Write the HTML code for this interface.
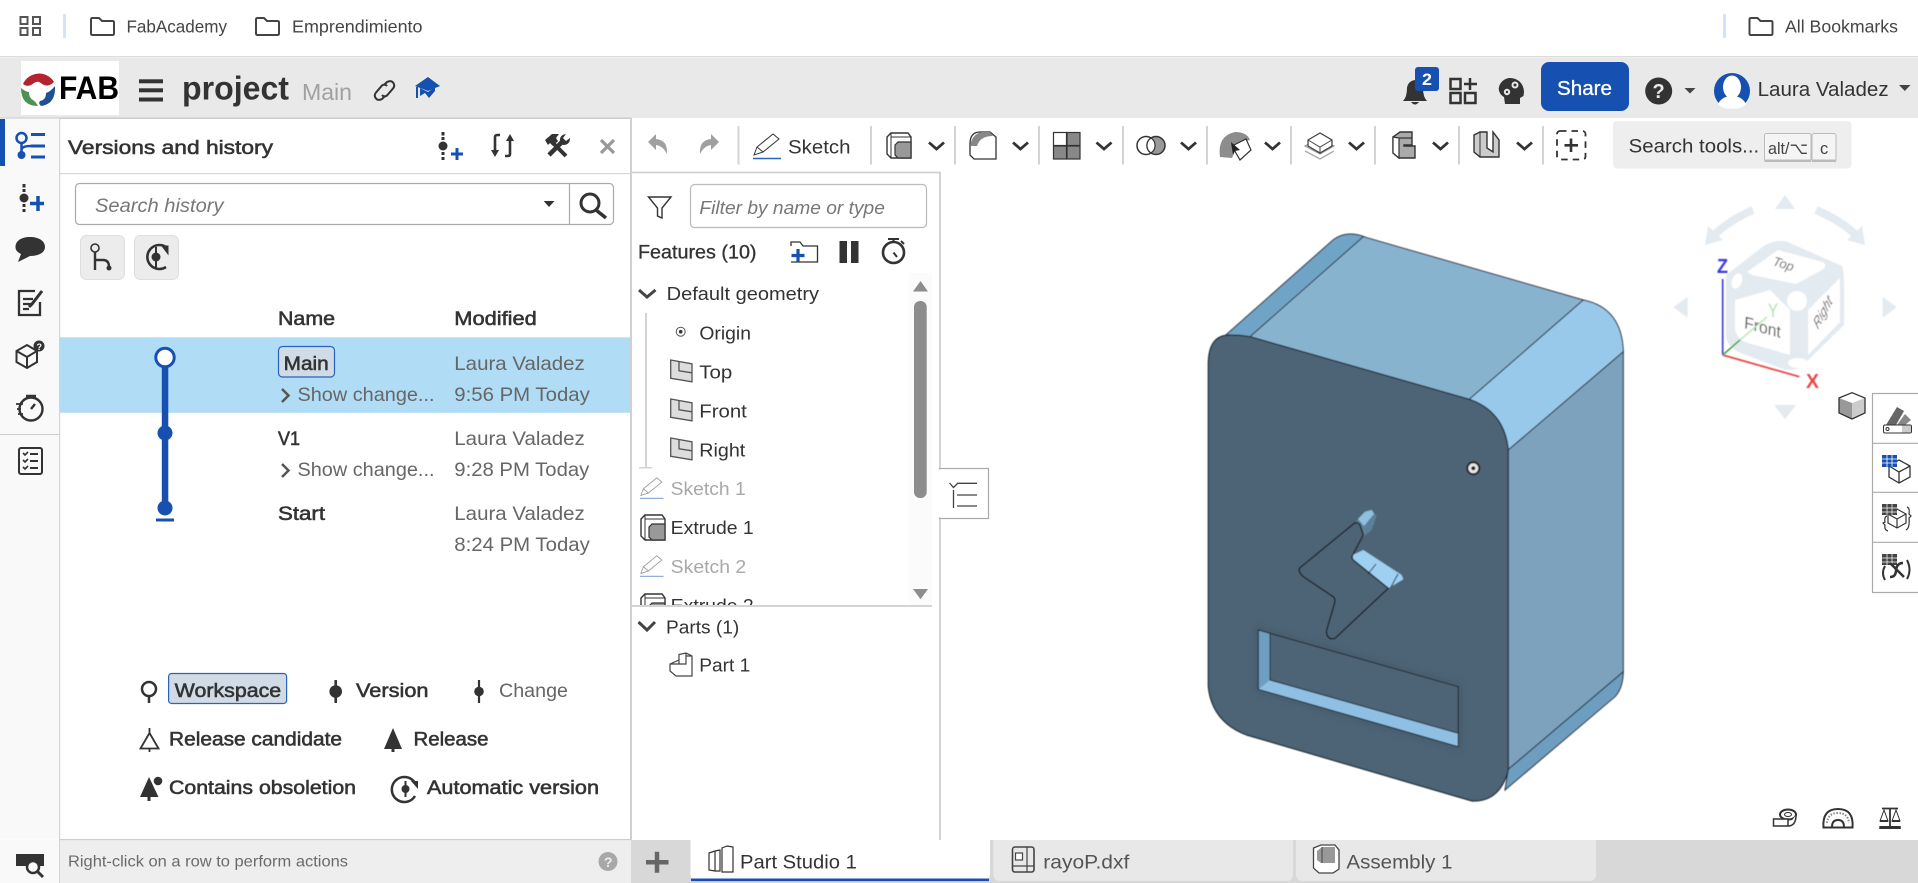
<!DOCTYPE html>
<html><head><meta charset="utf-8"><title>project</title>
<style>
html,body{margin:0;padding:0;background:#fff;width:1918px;height:883px;overflow:hidden}
svg{display:block}
text{font-family:"Liberation Sans",sans-serif;font-size:19px;fill:#333}
.bb{font-weight:bold}
.b{stroke:#333;stroke-width:.55px}
.g{fill:#666}
.l{fill:#a8a8a8}
.m{stroke:#333;stroke-width:.3px}
.i{font-style:italic;fill:#777}
</style></head><body>
<svg width="1918" height="883" viewBox="0 0 1918 883" xmlns="http://www.w3.org/2000/svg">
<defs>
<path id="ch" d="M0 0l7.5 6.5L15 0" fill="none" stroke="#333" stroke-width="2.8"/>
<g id="fold"><path d="M1 16.500V2.500Q1 1 2.500 1H9l3 3h10.500Q24 4 24 5.500v11Q24 18 22.500 18H2.500Q1 18 1 16.500Z" fill="none" stroke="#444" stroke-width="2"/></g>
<g id="plane"><path d="M.7.7L22 4.500V22.500L.7 19Z" fill="#ddd" stroke="#555" stroke-width="1.300"/><path d="M9 2.500V11.500L22 13.500" fill="none" stroke="#555" stroke-width="1.300"/></g>
<g id="pen"><path d="M1 22L4 14L20 1L26 6L10 19Z M4 14L10 19" fill="#fff" stroke="#333" stroke-width="1"/><path d="M0 25.500H28" stroke="#2a62c0" stroke-width="1.500"/></g>
<g id="ext"><path d="M1 5L5 1H22L25 5V26H5L1 22Z" fill="#fff" stroke="#333" stroke-width="1.400"/><path d="M5 1V26M5 5H25" fill="none" stroke="#333" stroke-width="1"/><path d="M9 13L12 10H25V26H12L9 23Z" fill="#999" stroke="#333" stroke-width="1.200"/></g>
<filter id="bl"><feGaussianBlur stdDeviation=".45"/></filter>
<filter id="bl2"><feGaussianBlur stdDeviation=".6"/></filter>
<filter id="bl3"><feGaussianBlur stdDeviation="3"/></filter>
</defs>

<!-- bookmarks -->
<rect width="1918" height="57" fill="#fff"/>
<g fill="none" stroke="#555" stroke-width="2"><rect x="20.500" y="17" width="7" height="7"/><rect x="33" y="17" width="7" height="7"/><rect x="20.500" y="28" width="7" height="7"/><rect x="33" y="28" width="7" height="7"/></g>
<rect x="63" y="14" width="3" height="24" fill="#d3e3fd"/>
<use href="#fold" x="90" y="17"/>
<text x="126.500" y="32.500" style="font-size:17.500px;fill:#444" textLength="100.500" lengthAdjust="spacingAndGlyphs">FabAcademy</text>
<use href="#fold" x="255" y="17"/>
<text x="292" y="32.500" style="font-size:17.500px;fill:#444" textLength="130.500" lengthAdjust="spacingAndGlyphs">Emprendimiento</text>
<rect x="1723" y="14" width="3" height="24" fill="#d3e3fd"/>
<use href="#fold" x="1748.500" y="17"/>
<text x="1785" y="32.500" style="font-size:17.500px;fill:#444" textLength="113" lengthAdjust="spacingAndGlyphs">All Bookmarks</text>
<rect y="56" width="1918" height="1.500" fill="#dcdcdc"/>

<!-- header -->
<rect y="58" width="1918" height="60" fill="#e9e9e9"/>
<rect x="21" y="61" width="98" height="54" fill="#fff"/>
<path d="M23 84A17.500 17.500 0 0 1 54 82Q48 88 42 84Q38 80 34 83Q28 88 23 84Z" fill="#b4232e"/>
<path d="M21 88Q26 92 29 92Q29 98 33 100Q36 102 38 106Q21 106 21 88Z" fill="#4f9152"/>
<path d="M55 86Q56 104 41 106Q38 103 40 101Q46 100 46 93Q50 92 55 86Z" fill="#1f4f96"/>
<text x="59" y="99" class="bb" style="font-size:32px;fill:#000" textLength="60" lengthAdjust="spacingAndGlyphs">FAB</text>
<g fill="#333"><rect x="139" y="79.300" width="24" height="4"/><rect x="139" y="88.300" width="24" height="4"/><rect x="139" y="97.500" width="24" height="4"/></g>
<text x="182" y="99.300" class="bb" style="font-size:33px" textLength="107" lengthAdjust="spacingAndGlyphs">project</text>
<text x="302" y="100" style="font-size:23px;fill:#a0a0a0" textLength="50" lengthAdjust="spacingAndGlyphs">Main</text>
<g fill="none" stroke="#333" stroke-width="2"><path d="M384 85l3-3q4-2 6 .5 2.500 3 0 6l-6 7q-3 2-5-.5"/><path d="M385 96l-3 3q-4 2-6-.5-2.500-3 0-6l6-7q3-2 5 .5"/></g>
<path d="M415 86L428 77L440 86L428 91Z" fill="#1650b0"/>
<path d="M420 90V96L425 93L429 98L435 91V87L428 92L420 88Z" fill="#1650b0"/>
<rect x="416" y="87" width="2" height="11" fill="#1650b0"/>
<path d="M1403 101Q1407 97 1407 88Q1408 81 1415 80Q1422 81 1423 88Q1423 97 1427 101ZM1411 102Q1415 107 1419 102Z" fill="#333"/>
<rect x="1415" y="67" width="24" height="24" rx="3" fill="#1650b0"/>
<text x="1422" y="85" class="bb" style="font-size:17px;fill:#fff" textLength="10" lengthAdjust="spacingAndGlyphs">2</text>
<g fill="none" stroke="#333" stroke-width="2.500"><rect x="1450.500" y="79" width="10" height="10"/><rect x="1450.500" y="93" width="10" height="10"/><rect x="1465" y="93" width="10.500" height="10"/><path d="M1470 78V90M1464 84H1477"/></g>
<path d="M1510 78C1519 78 1524 85 1524 92L1523.500 96L1520 98V104H1505L1504 97C1500 95 1498 90 1499 87C1500 82 1505 78 1510 78Z" fill="#333"/>
<g fill="none" stroke="#e9e9e9" stroke-width="2"><circle cx="1515" cy="85" r="2.500"/><circle cx="1507" cy="92" r="2.200"/></g>
<rect x="1541" y="62" width="88" height="49" rx="8" fill="#1650b0"/>
<text x="1557" y="95" style="font-size:20px;fill:#fff;stroke:#fff;stroke-width:.3px" textLength="55" lengthAdjust="spacingAndGlyphs">Share</text>
<circle cx="1658.700" cy="91" r="13.500" fill="#333"/>
<text x="1652.500" y="98" class="bb" style="font-size:20px;fill:#e9e9e9">?</text>
<path d="M1684.500 88h11l-5.500 5.500z" fill="#444"/>
<ellipse cx="1732" cy="91" rx="18" ry="18" fill="#1650b0"/>
<ellipse cx="1732" cy="87" rx="9" ry="11.500" fill="#fff"/>
<path d="M1718 104Q1722 96 1732 96Q1742 96 1746 104Q1742 109 1732 109Q1722 109 1718 104Z" fill="#fff"/>
<text x="1757.600" y="96" style="font-size:20.500px" textLength="131" lengthAdjust="spacingAndGlyphs">Laura Valadez</text>
<path d="M1899 85h11.500l-5.700 6z" fill="#444"/>
<rect y="117.500" width="632" height="1.500" fill="#ccc"/>

<!-- left sidebar -->
<rect y="118.500" width="60" height="721" fill="#f9f9f9"/>
<rect y="840" width="60" height="43" fill="#f9f9f9"/>
<rect x="59" y="118" width="1.200" height="765" fill="#d4d4d4"/>
<rect y="119" width="5" height="47" fill="#1650b0"/>
<g fill="none" stroke="#1650b0" stroke-width="2.500"><circle cx="21.500" cy="138" r="5"/><path d="M21.500 143V156M21.500 150Q21.500 146 31 146"/></g>
<g fill="#1650b0"><circle cx="21.500" cy="155" r="4"/><rect x="31" y="133" width="14" height="3"/><rect x="31" y="144.500" width="14" height="3"/><rect x="31" y="155.500" width="14" height="3"/></g>
<g fill="#333"><circle cx="24" cy="198" r="4.500"/><rect x="22.500" y="184" width="3" height="3.500"/><rect x="22.500" y="189" width="3" height="3"/><rect x="22.500" y="204" width="3" height="3"/><rect x="22.500" y="209" width="3" height="3"/></g>
<path d="M38 196V211M30 203.500H44" stroke="#1650b0" stroke-width="3.500"/>
<path d="M30 237C39 237 45 241 45 247C45 253 38 256 30 256L18 262L21 254C17 252 15.500 250 15.500 247C15.500 241 21 237 30 237Z" fill="#333"/>
<g fill="none" stroke="#333" stroke-width="2.300"><path d="M40 302V315H19V291H35"/><path d="M23 299H33M23 304H33M23 309H29"/></g>
<path d="M42 291L32 304L29 307" stroke="#333" stroke-width="3" fill="none"/>
<g fill="none" stroke="#333" stroke-width="2"><path d="M16.500 351L27 345L37 351V362L27 368L16.500 362ZM16.500 351L27 357L37 351M27 357V368"/></g>
<circle cx="39" cy="346" r="5.500" fill="#333"/><text x="36.500" y="350" class="bb" style="font-size:9px;fill:#fff">?</text>
<g fill="none" stroke="#333" stroke-width="2.400"><circle cx="31" cy="409" r="11.500"/><path d="M26 396H36M31 396V398M31 409L35 404"/><path d="M16 404H23M17 409H21M18 414H23" stroke-width="1.800"/></g>
<rect y="434" width="59" height="1" fill="#ccc"/>
<rect x="19" y="448" width="23" height="26" rx="2" fill="none" stroke="#333" stroke-width="2"/>
<g fill="none" stroke="#333" stroke-width="1.600"><path d="M23 453l2 2 3-3M23 460l2 2 3-3M23 467l2 2 3-3"/><path d="M30 454H38M30 461H38M30 468H38" stroke-width="2"/></g>
<path d="M16 854H44V866H39A10 10 0 0 0 27 866H16Z" fill="#333"/>
<circle cx="33" cy="867" r="6" fill="#fff" stroke="#333" stroke-width="2.500"/><path d="M37 871L43 877" stroke="#333" stroke-width="3"/>

<!-- versions panel -->
<rect x="60" y="840" width="571" height="43" fill="#eee"/>
<rect x="60" y="839" width="571" height="1.200" fill="#ccc"/>
<text x="68" y="866.500" style="font-size:16px;fill:#6b6b6b" textLength="280" lengthAdjust="spacingAndGlyphs">Right-click on a row to perform actions</text>
<circle cx="608" cy="861.500" r="9.500" fill="#a8a8a8"/><text x="604" y="867" class="bb" style="font-size:14px;fill:#eee">?</text>
<text x="68" y="154" class="b" style="font-size:19.500px" textLength="205" lengthAdjust="spacingAndGlyphs">Versions and history</text>
<g fill="#333"><circle cx="443" cy="146" r="4.500"/><rect x="441.500" y="132" width="3" height="3.500"/><rect x="441.500" y="137" width="3" height="3"/><rect x="441.500" y="152" width="3" height="3"/><rect x="441.500" y="157" width="3" height="3"/></g>
<path d="M457 148V160M451 154H463" stroke="#1650b0" stroke-width="3"/>
<g fill="none" stroke="#333" stroke-width="2.600"><path d="M495 151V137Q495 135 497.500 135H500"/><path d="M510 140V154Q510 156 507.500 156H505"/></g>
<g fill="#333"><path d="M491 150H499L495 157Z"/><path d="M506 141H514L510 134Z"/></g>
<path d="M549 155L564 140" stroke="#333" stroke-width="4.500"/>
<path d="M566 156L551 141" stroke="#333" stroke-width="4"/>
<path d="M545 140L552 134H559L556 138L558 141L553 146L550 143L548 145Z" fill="#333"/>
<path d="M560 142Q559 135 566 134L563 138L566 141L570 138Q570 145 563 145Z" fill="#333"/>
<path d="M601 140L614 153M614 140L601 153" stroke="#999" stroke-width="3.200"/>
<rect x="60" y="173" width="570" height="1.200" fill="#d8d8d8"/>
<rect x="75.500" y="183.500" width="538" height="41" rx="4" fill="#fff" stroke="#aaa" stroke-width="1.200"/>
<path d="M569.500 184V224" stroke="#aaa" stroke-width="1.200"/>
<text x="95" y="212" class="i" style="font-size:19.500px" textLength="128.500" lengthAdjust="spacingAndGlyphs">Search history</text>
<path d="M543.700 201H554.500L549 207Z" fill="#333"/>
<circle cx="590" cy="203" r="9" fill="none" stroke="#333" stroke-width="3"/><path d="M596 210L606 218" stroke="#333" stroke-width="3.500"/>
<rect x="80.500" y="235.500" width="44" height="44" rx="6" fill="#ececec" stroke="#ddd"/>
<rect x="134.500" y="235.500" width="44" height="44" rx="6" fill="#ececec" stroke="#ddd"/>
<circle cx="95" cy="248" r="4" fill="none" stroke="#333" stroke-width="1.600"/>
<path d="M95 252V270M95 260H103Q109 260 109 267" fill="none" stroke="#333" stroke-width="2.400"/><circle cx="109" cy="268" r="2.500" fill="#333"/>
<path d="M166 247A12 12 0 1 0 166 267" fill="none" stroke="#333" stroke-width="2.600"/><path d="M162 246H168V254Z" fill="#333" stroke="#333"/>
<path d="M156 247V268" stroke="#333" stroke-width="2"/><circle cx="156" cy="257" r="4.500" fill="#333"/>

<text x="278" y="325" class="b" style="font-size:19px" textLength="57" lengthAdjust="spacingAndGlyphs">Name</text>
<text x="454.300" y="325" class="b" style="font-size:19px" textLength="82.500" lengthAdjust="spacingAndGlyphs">Modified</text>
<rect x="60" y="337.300" width="570" height="75.500" fill="#b0dcf6"/>
<rect x="161.800" y="360" width="6.500" height="153" fill="#1650b0"/>
<circle cx="165" cy="357.500" r="9.200" fill="#fff" stroke="#1650b0" stroke-width="3"/>
<circle cx="165" cy="433" r="7.500" fill="#1650b0"/><circle cx="165" cy="508" r="7.500" fill="#1650b0"/>
<rect x="156" y="518.500" width="18" height="3" fill="#1650b0"/>
<rect x="278.500" y="346.500" width="56" height="30.500" rx="4" fill="#d0dbe6" stroke="#2a62c0" stroke-width="1.200"/>
<text x="283.700" y="370" class="b" style="font-size:19px" textLength="45" lengthAdjust="spacingAndGlyphs">Main</text>
<text x="454.300" y="370" class="g" style="font-size:19.500px" textLength="130.500" lengthAdjust="spacingAndGlyphs">Laura Valadez</text>
<path d="M282 389L288.500 395.500L282 402" fill="none" stroke="#555" stroke-width="2.500"/>
<text x="297.500" y="401" class="g" style="font-size:19.500px" textLength="137" lengthAdjust="spacingAndGlyphs">Show change...</text>
<text x="454.300" y="401" class="g" style="font-size:19.500px" textLength="135.500" lengthAdjust="spacingAndGlyphs">9:56 PM Today</text>
<text x="278" y="445" class="b" style="font-size:19px" textLength="22" lengthAdjust="spacingAndGlyphs">V1</text>
<text x="454.300" y="445" class="g" style="font-size:19.500px" textLength="130.500" lengthAdjust="spacingAndGlyphs">Laura Valadez</text>
<path d="M282 464L288.500 470.500L282 477" fill="none" stroke="#555" stroke-width="2.500"/>
<text x="297.500" y="476" class="g" style="font-size:19.500px" textLength="137" lengthAdjust="spacingAndGlyphs">Show change...</text>
<text x="454.300" y="476" class="g" style="font-size:19.500px" textLength="135" lengthAdjust="spacingAndGlyphs">9:28 PM Today</text>
<text x="278" y="520" class="b" style="font-size:19px" textLength="47" lengthAdjust="spacingAndGlyphs">Start</text>
<text x="454.300" y="520" class="g" style="font-size:19.500px" textLength="130.500" lengthAdjust="spacingAndGlyphs">Laura Valadez</text>
<text x="454.300" y="551" class="g" style="font-size:19.500px" textLength="135.500" lengthAdjust="spacingAndGlyphs">8:24 PM Today</text>

<!-- legend -->
<circle cx="149" cy="689" r="7" fill="none" stroke="#333" stroke-width="2.500"/><path d="M149 696V703" stroke="#333" stroke-width="2.500"/>
<rect x="168.600" y="673.500" width="118" height="30" rx="3" fill="#d0dbe6" stroke="#2a62c0" stroke-width="1.200"/>
<text x="174.700" y="697" class="b" style="font-size:19px" textLength="106.500" lengthAdjust="spacingAndGlyphs">Workspace</text>
<path d="M335.700 680V703" stroke="#333" stroke-width="2.600"/><circle cx="335.700" cy="691.500" r="6.300" fill="#333"/>
<text x="356" y="697" class="b" style="font-size:19px" textLength="72.500" lengthAdjust="spacingAndGlyphs">Version</text>
<path d="M479 680V703" stroke="#333" stroke-width="2.200"/><circle cx="479" cy="691.500" r="4.800" fill="#333"/>
<text x="499" y="697" class="g" style="font-size:19px" textLength="69" lengthAdjust="spacingAndGlyphs">Change</text>
<path d="M149.500 728V733L140.500 748.500H158.500L149.500 733M149.500 748.500V752" fill="none" stroke="#333" stroke-width="1.800"/>
<text x="169" y="745.300" class="b" style="font-size:19px" textLength="173" lengthAdjust="spacingAndGlyphs">Release candidate</text>
<path d="M393 728L402 749H394.500V752H391.500V749H384Z" fill="#333"/>
<text x="413.500" y="745.300" class="b" style="font-size:19px" textLength="75" lengthAdjust="spacingAndGlyphs">Release</text>
<path d="M149 777L158.500 797H150.500V801H147.500V797H140Z" fill="#333"/><circle cx="158" cy="781" r="4.300" fill="#333"/>
<text x="169" y="794" class="b" style="font-size:19px" textLength="187" lengthAdjust="spacingAndGlyphs">Contains obsoletion</text>
<path d="M415 783A12.500 12.500 0 1 0 415 796" fill="none" stroke="#333" stroke-width="2.500"/><path d="M411 781H418V789Z" fill="#333"/>
<path d="M405.500 781V797" stroke="#333" stroke-width="2"/><circle cx="405.500" cy="789" r="4" fill="#333"/>
<text x="427" y="794" class="b" style="font-size:19px" textLength="172" lengthAdjust="spacingAndGlyphs">Automatic version</text>

<rect x="630" y="118" width="2" height="722" fill="#d0d0d0"/>

<!-- toolbar -->
<path d="M648 142L656 134V139Q668 140 667 154Q663 146 656 145V150Z" fill="#a0a0a0"/>
<path d="M719 142L711 134V139Q699 140 700 154Q704 146 711 145V150Z" fill="#a0a0a0"/>
<g fill="#d4d4d4"><rect x="737.500" y="126" width="2" height="38.500"/><rect x="870" y="126" width="2" height="38.500"/><rect x="954" y="126" width="2" height="38.500"/><rect x="1038" y="126" width="2" height="38.500"/><rect x="1122" y="126" width="2" height="38.500"/><rect x="1206" y="126" width="2" height="38.500"/><rect x="1290" y="126" width="2" height="38.500"/><rect x="1374" y="126" width="2" height="38.500"/><rect x="1458" y="126" width="2" height="38.500"/><rect x="1542" y="126" width="2" height="38.500"/></g>
<use href="#pen" x="753" y="133"/>
<text x="788" y="153.300" style="font-size:19.500px" textLength="62.500" lengthAdjust="spacingAndGlyphs">Sketch</text>
<use href="#ext" x="886" y="132"/>
<use href="#ch" x="929" y="142.500"/><use href="#ch" x="1013" y="142.500"/><use href="#ch" x="1096.500" y="142.500"/><use href="#ch" x="1181" y="142.500"/><use href="#ch" x="1265" y="142.500"/><use href="#ch" x="1349" y="142.500"/><use href="#ch" x="1433" y="142.500"/><use href="#ch" x="1517" y="142.500"/>
<path d="M970 144Q970 132 980 132H990L996 137V159H974L970 155Z" fill="#fff" stroke="#333" stroke-width="1.300"/>
<path d="M970 146Q972 134 982 132H990L993 136Q980 136 977 146Z" fill="#888"/>
<g stroke="#333" stroke-width="1.200"><rect x="1053.500" y="132.500" width="13" height="13" fill="#fff"/><rect x="1067" y="132.500" width="13" height="13" fill="#888"/><rect x="1053.500" y="146" width="13" height="13" fill="#888"/><rect x="1067" y="146" width="13" height="13" fill="#888"/></g>
<circle cx="1146" cy="145.500" r="9" fill="#fff" stroke="#333" stroke-width="1.500"/><circle cx="1156" cy="145.500" r="9" fill="#999" stroke="#333" stroke-width="1.500"/><path d="M1151 138A9 9 0 0 1 1151 153A9 9 0 0 1 1151 138Z" fill="#fff" stroke="#333" stroke-width="1.200"/>
<path d="M1220 157Q1217 136 1235 132Q1247 132 1250 140L1238 143L1232 158Z" fill="#8d8d8d"/>
<path d="M1232 146L1246 139L1251 150L1240 160Z" fill="#fff" stroke="#333" stroke-width="1.200"/><path d="M1231 142L1240 150L1235 151L1233 155Z" fill="#222"/>
<path d="M1305 146L1320 154L1334 146L1320 138Z" fill="#fff" stroke="#999" stroke-width="1.200"/><path d="M1305 151L1320 159L1334 151" fill="none" stroke="#aaa" stroke-width="1.300"/>
<path d="M1308 140L1320 133L1332 140V146L1320 153L1308 146Z" fill="#fff" stroke="#444" stroke-width="1.300"/><path d="M1308 140L1320 147L1332 140M1320 147V153" fill="none" stroke="#444"/>
<path d="M1393 137L1400 132H1412V145H1404V146H1415V158H1399L1393 153Z" fill="#aaa" stroke="#333" stroke-width="1.400"/><path d="M1393 137V153L1399 158V138L1393 137ZM1399 138H1412" fill="#fff" stroke="#333" stroke-width="1.200"/>
<path d="M1474 135L1480 132H1487V148L1493 152V132L1499 140V157H1480L1474 152Z" fill="#ccc" stroke="#333" stroke-width="1.400"/><path d="M1480 132V157" stroke="#333"/>
<rect x="1557" y="131" width="28.500" height="28.500" rx="3" fill="none" stroke="#333" stroke-width="1.800" stroke-dasharray="6.500 5"/>
<path d="M1571 138.500V152M1564.500 145.300H1578" stroke="#333" stroke-width="2.600"/>
<rect x="1613" y="121" width="238.500" height="47.500" rx="4" fill="#eee"/>
<text x="1628.700" y="152.700" style="font-size:19.500px" textLength="130.500" lengthAdjust="spacingAndGlyphs">Search tools...</text>
<rect x="1764.500" y="133.500" width="46.500" height="28" rx="2" fill="#f4f4f4" stroke="#bbb"/><rect x="1764.500" y="159.500" width="46.500" height="2.500" fill="#bbb"/>
<rect x="1812" y="133.500" width="24" height="28" rx="2" fill="#f4f4f4" stroke="#bbb"/><rect x="1812" y="159.500" width="24" height="2.500" fill="#bbb"/>
<text x="1768" y="154" style="font-size:16.500px;fill:#444" textLength="40" lengthAdjust="spacingAndGlyphs">alt/⌥</text>
<text x="1820" y="154" style="font-size:16.500px;fill:#444">c</text>

<!-- features panel -->
<path d="M632 172.500H940V840" fill="none" stroke="#d0d0d0" stroke-width="1.800"/>
<path d="M648.500 197H671L662 208V218L657.500 216V208Z" fill="#fff" stroke="#333" stroke-width="1.400"/>
<rect x="690.500" y="184.500" width="236" height="43" rx="4" fill="#fff" stroke="#bbb" stroke-width="1.200"/>
<text x="699.400" y="214" class="i" style="font-size:18.500px" textLength="185.500" lengthAdjust="spacingAndGlyphs">Filter by name or type</text>
<text x="638" y="258.300" class="m" style="font-size:19px" textLength="118.500" lengthAdjust="spacingAndGlyphs">Features (10)</text>
<path d="M791 246V242H800L803 246H817.500V262H791" fill="none" stroke="#333" stroke-width="1.300"/>
<path d="M798 249V262M791.500 255.500H804.500" stroke="#1650b0" stroke-width="3.200"/>
<rect x="839.500" y="241" width="7.500" height="22" fill="#333"/><rect x="851" y="241" width="7.500" height="22" fill="#333"/>
<circle cx="893.500" cy="252.500" r="10.500" fill="none" stroke="#333" stroke-width="2.600"/><path d="M888 239H899M893.500 239V242M893.500 252.500L897 257M901 241L904 244" stroke="#333" stroke-width="2" fill="none"/>
<path d="M639 290L647 297L655.500 290" fill="none" stroke="#444" stroke-width="3"/>
<text x="666.700" y="300" style="font-size:18.500px" textLength="152.300" lengthAdjust="spacingAndGlyphs">Default geometry</text>
<rect x="645" y="313" width="2" height="155" fill="#d4d4d4"/><rect x="639" y="467" width="13.500" height="1.500" fill="#d4d4d4"/>
<circle cx="680.700" cy="331.700" r="4.500" fill="none" stroke="#555" stroke-width="1"/><circle cx="680.700" cy="331.700" r="1.800" fill="#333"/>
<text x="699.400" y="339.300" style="font-size:18.500px" textLength="51.600" lengthAdjust="spacingAndGlyphs">Origin</text>
<use href="#plane" x="670" y="359.300"/><text x="699.300" y="378.300" style="font-size:18.500px" textLength="33" lengthAdjust="spacingAndGlyphs">Top</text>
<use href="#plane" x="670" y="398.300"/><text x="699.300" y="417.300" style="font-size:18.500px" textLength="47.500" lengthAdjust="spacingAndGlyphs">Front</text>
<use href="#plane" x="670" y="437.300"/><text x="699.300" y="456.300" style="font-size:18.500px" textLength="46" lengthAdjust="spacingAndGlyphs">Right</text>
<g opacity=".5" transform="translate(640 477) scale(.84)"><use href="#pen"/></g>
<text x="670.700" y="495" class="l" style="font-size:18.500px" textLength="75" lengthAdjust="spacingAndGlyphs">Sketch 1</text>
<use href="#ext" x="640" y="514"/>
<text x="670.700" y="534" style="font-size:18.500px" textLength="83" lengthAdjust="spacingAndGlyphs">Extrude 1</text>
<g opacity=".5" transform="translate(640 555) scale(.84)"><use href="#pen"/></g>
<text x="670.700" y="573" class="l" style="font-size:18.500px" textLength="75.500" lengthAdjust="spacingAndGlyphs">Sketch 2</text>
<use href="#ext" x="640" y="593"/>
<text x="670.700" y="612" style="font-size:18.500px" textLength="83" lengthAdjust="spacingAndGlyphs">Extrude 2</text>
<rect x="632" y="605" width="307" height="35" fill="#fff"/>
<rect x="909" y="273" width="23" height="332" fill="#fbfbfb"/>
<path d="M913 291.500L920.500 281L928 291.500Z" fill="#8d8d8d"/>
<rect x="914" y="301" width="12.700" height="197" rx="6" fill="#8d8d8d"/>
<path d="M913 589H928L920.500 599.300Z" fill="#8d8d8d"/>
<rect x="632" y="605" width="300" height="2" fill="#d4d4d4"/>
<path d="M638.500 622L647 630L655 622" fill="none" stroke="#444" stroke-width="3"/>
<text x="666" y="633.300" style="font-size:18.500px" textLength="73.300" lengthAdjust="spacingAndGlyphs">Parts (1)</text>
<path d="M670 664L679 660V654.500L686 653L692 656V676H676L670 671Z M679 660V664H670M686 653V664H679M692 656H686" fill="#fff" stroke="#444" stroke-width="1.200"/>
<text x="699.300" y="671.700" style="font-size:18.500px" textLength="51" lengthAdjust="spacingAndGlyphs">Part 1</text>
<rect x="939.500" y="468.500" width="49" height="50" fill="#fff" stroke="#aaa" stroke-width="1.200"/><rect x="938" y="469.500" width="3" height="48" fill="#fff"/>
<path d="M957 483.300H977M957 495H977M957 506H977M953.500 490V508M949.500 483L953.500 487.500L958 483" fill="none" stroke="#444" stroke-width="1.300"/>

<!-- 3D model -->
<g filter="url(#bl)">
<path d="M1225 335.700L1333 240Q1346 230 1364 236.700L1250 337Z" fill="#6fa4c6" stroke="#223" stroke-width="1"/>
<path d="M1250 336.700L1363.300 236.700L1583.300 300L1469.300 399.300Z" fill="#88b3cf" stroke="#223" stroke-width="1"/>
<path d="M1583.300 300Q1622 308 1623.300 351.700L1508.300 450Q1505 412 1469.300 399.300Z" fill="#99c9ea" stroke="#223" stroke-width="1"/>
<path d="M1508.300 450L1623.300 351.700V671.700L1508.300 769.300Z" fill="#7ca2bd" stroke="#223" stroke-width="1"/>
<path d="M1623.300 671.700Q1623 688 1615 696.700L1505 790L1508.300 769.300Z" fill="#6d9dbf" stroke="#223" stroke-width="1"/>
<path d="M1208.300 362C1209 345 1215 335 1230 335Q1240 335 1250 336.700L1469.300 399.300Q1504 411 1508.300 450V770Q1500 802 1472 801L1246.700 735Q1212 722 1208.300 686.700Z" fill="#4d6476" stroke="#1c2a34" stroke-width="1.200"/>
<circle cx="1473.300" cy="468.300" r="7" fill="#222"/><circle cx="1473.300" cy="468.300" r="5" fill="#e8e8e8"/><circle cx="1473.300" cy="468.300" r="2" fill="#222"/>
<!-- soft shadow around features -->
<path d="M1258.300 630L1458.300 686.700V746.700L1258.300 689.300Z" fill="none" stroke="#3f5465" stroke-width="6" filter="url(#bl3)" opacity=".5"/>
<!-- bolt -->
<path d="M1355 522.700L1365 511.700L1371.700 510L1376.700 516L1371.700 530L1363.300 536.700L1360 525Z" fill="#5d7f98"/>
<path d="M1358 519L1365 511.700L1371.700 510L1374 514L1364 526Z" fill="#8fc0e0"/>
<path d="M1353.300 560L1352.700 555L1363.300 550L1401.700 575L1403.300 579.300L1388.300 588.300Z" fill="#9ed0f2"/>
<path d="M1299.300 568.300L1355 522.700Q1358 522 1360 525L1363.300 535L1352.700 555Q1351 558 1353.300 560L1388.300 588.300L1335 638.300Q1330 640 1327.500 636Q1326 633 1326.700 630L1335 601.700Q1335 598 1333.300 596.700L1303.300 576.700Q1298 572 1299.300 568.300Z" fill="#4d6476" stroke="#111" stroke-width="1.200"/>
<path d="M1376 564L1368 574M1398 574L1391 587" stroke="#223" stroke-width="1"/>
<!-- recess -->
<path d="M1258.300 630L1458.300 686.700V746.700L1258.300 689.300Z" fill="#4d6476"/>
<path d="M1258.300 630L1270 634V680L1258.300 689.300Z" fill="#6e9fc0"/>
<path d="M1258.300 689.300L1270 680L1458.300 733.300V746.700Z" fill="#8fc0e4"/>
<path d="M1258.300 630L1458.300 686.700V746.700L1258.300 689.300Z M1270 634V680L1458.300 733.300" fill="none" stroke="#18242c" stroke-width="1"/>
</g>

<!-- view cube -->
<g filter="url(#bl2)">
<g fill="#e3eaf0">
<path d="M1775 209L1785 195L1795 209Z"/><path d="M1673.300 307.300L1687.700 296.700V317.700Z"/><path d="M1882.700 296.700L1896.700 307.300L1882.700 317.700Z"/><path d="M1774.300 405H1796L1785 419.300Z"/>
<path d="M1705 245L1708 226L1723 240Z"/><path d="M1865 245L1862 226L1847 240Z"/>
</g>
<path d="M1753 210Q1730 220 1714 235M1816 210Q1840 220 1856 235" fill="none" stroke="#e3eaf0" stroke-width="8"/>
<path d="M1726 275L1765 245Q1780 238 1790 243L1842 266Q1844 270 1844 285V325L1800 368Q1790 372 1780 368L1738 352Q1726 345 1726 335Z" fill="#e3eaf0"/>
<path d="M1747 272L1778 250L1823 262Q1828 266 1822 270L1796 284L1752 275Z" fill="#fff"/>
<path d="M1735 300L1770 290L1790 310V355L1748 343Q1734 338 1735 325Z" fill="#fff"/>
<path d="M1808 310L1840 278V322L1808 355Z" fill="#fff"/>
<circle cx="1797" cy="301" r="10" fill="#fff"/><ellipse cx="1737" cy="281" rx="5" ry="8" fill="#fff" transform="rotate(20 1737 281)"/><ellipse cx="1798" cy="363" rx="10" ry="5" fill="#fff"/>
<text transform="matrix(.96 .3 -.3 .96 1772 265)" style="font-size:13px;font-style:italic;fill:#666">Top</text>
<text transform="matrix(.96 .26 -.05 1 1744 328)" style="font-size:17px;fill:#555" textLength="38" lengthAdjust="spacingAndGlyphs">Front</text>
<text transform="matrix(.45 -.85 .55 .85 1818 330)" style="font-size:14px;font-style:italic;fill:#666">Right</text>
<path d="M1722.700 355V279" stroke="#3a3ae0" stroke-width="1.600"/>
<path d="M1722.700 355L1799.300 376.700" stroke="#e84848" stroke-width="1.800"/>
<path d="M1722.700 355L1740 340" stroke="#3aa63a" stroke-width="1.500"/><path d="M1740 340L1767 317" stroke="#b8e6b8" stroke-width="1.500"/>
<text x="1717" y="273" class="bb" style="font-size:20px;fill:#3a3ae0" textLength="11" lengthAdjust="spacingAndGlyphs">Z</text>
<text x="1806" y="388" class="bb" style="font-size:20px;fill:#e84848" textLength="13" lengthAdjust="spacingAndGlyphs">X</text>
<text x="1768" y="317" style="font-size:19px;fill:#aee0ae" textLength="10" lengthAdjust="spacingAndGlyphs">Y</text>
</g>
<path d="M1839 398L1852 392.700L1865 398V413L1852 419L1839 413Z" fill="#ccc"/>
<path d="M1839 398L1852 392.700L1865 398L1852 403Z" fill="#fff"/><path d="M1839 398L1852 403V419L1839 413Z" fill="#999"/>
<path d="M1839 398L1852 392.700L1865 398V413L1852 419L1839 413Z" fill="none" stroke="#333" stroke-width="1.300"/>

<!-- right panel -->
<rect x="1872.500" y="393.500" width="50" height="199" fill="#fff" stroke="#aaa" stroke-width="1.200"/>
<path d="M1872 443.300H1918M1872 492.300H1918M1872 542.300H1918" stroke="#aaa" stroke-width="1.200"/>
<path d="M1886 425L1897 407L1904 411L1896 425Z" fill="#666"/><path d="M1897 425L1905 414L1911 420L1905 425Z" fill="#888"/>
<rect x="1883.500" y="425" width="28" height="8" rx="1.500" fill="#fff" stroke="#333"/><rect x="1902" y="425.500" width="9" height="7" fill="#ccc"/><circle cx="1887.500" cy="429" r="1.500" fill="none" stroke="#333"/>
<path d="M1889 466L1899 460L1910 466V477L1899 483L1889 477ZM1889 466L1899 472L1910 466M1899 472V483" fill="#fff" stroke="#333" stroke-width="1.300"/>
<rect x="1882" y="455" width="15" height="12" fill="#1650b0"/><path d="M1887 455V467M1892 455V467M1882 459H1897M1882 463H1897" stroke="#fff" stroke-width=".8"/>
<path d="M1888 514L1897 509L1906 514V523L1897 528L1888 523ZM1888 514L1897 519L1906 514M1897 519V528" fill="#fff" stroke="#333" stroke-width="1.200"/>
<rect x="1882" y="504" width="15" height="11" fill="#444"/><path d="M1887 504V515M1892 504V515M1882 508H1897M1882 512H1897" stroke="#fff" stroke-width=".7"/>
<path d="M1887 516Q1884 517 1885 522L1883 523L1885 525Q1884 530 1888 531M1907 507Q1910 508 1909 514L1911 516L1909 518Q1910 528 1906 530" fill="none" stroke="#333" stroke-width="1.200"/>
<rect x="1882" y="554" width="15" height="11" fill="#444"/><path d="M1887 554V565M1892 554V565M1882 558H1897M1882 562H1897" stroke="#fff" stroke-width=".7"/>
<path d="M1885 566Q1881 573 1885 580M1907 560Q1912 570 1907 579" fill="none" stroke="#333" stroke-width="2"/>
<path d="M1890 577Q1896 577 1896 570Q1897 563 1903 563M1890 563L1904 577" fill="none" stroke="#333" stroke-width="2.500"/>

<!-- bottom-right tools -->
<ellipse cx="1788" cy="814.500" rx="8" ry="5" fill="none" stroke="#333" stroke-width="2"/><ellipse cx="1788" cy="814.500" rx="3.500" ry="2" fill="none" stroke="#333"/>
<path d="M1773.500 819H1788V826H1773.500ZM1788 826Q1796 826 1796 815" fill="#fff" stroke="#333" stroke-width="1.500"/>
<path d="M1823.500 827.500Q1822 809 1838 809Q1854 809 1852.500 827.500Z" fill="none" stroke="#333" stroke-width="2"/><path d="M1832 827Q1832 820 1838 820Q1844 820 1844 827" fill="none" stroke="#333" stroke-width="2"/><path d="M1827 823Q1828 813 1838 813Q1848 813 1849 823" fill="none" stroke="#888" stroke-width="2" stroke-dasharray="1.500 1.500"/>
<path d="M1890 808V826M1882 808.500H1898" stroke="#333" stroke-width="1.800"/><rect x="1879.300" y="826" width="21.500" height="3" fill="#333"/>
<path d="M1884 810L1880 821H1888ZM1896 810L1892 821H1900Z" fill="none" stroke="#333" stroke-width="1"/><path d="M1880 820H1888V822H1880ZM1892 820H1900V822H1892Z" fill="#333"/>

<!-- tabs -->
<rect x="631" y="840" width="1287" height="43" fill="#d8d8d8"/>
<path d="M657 851.700V872.700M646 862.200H668.500" stroke="#666" stroke-width="4.500"/>
<path d="M690.500 840H990V874Q990 881 983 881H697Q690.500 881 690.500 874Z" fill="#fff"/>
<path d="M691 879.800H989" stroke="#1650b0" stroke-width="2.600"/>
<path d="M709 853L715 851V871L709 870ZM715 851L720 850V871H715ZM722 848L727 846L733 847V872L727 872H722Z" fill="#fff" stroke="#333" stroke-width="1.200"/>
<text x="740" y="868.300" style="font-size:19.500px" textLength="116.800" lengthAdjust="spacingAndGlyphs">Part Studio 1</text>
<path d="M993.500 840H1293V874Q1293 881 1286 881H1000Q993.500 881 993.500 874Z" fill="#e8e8e8"/>
<rect x="1012.500" y="847" width="21.500" height="25" rx="2.500" fill="none" stroke="#444" stroke-width="1.600"/>
<path d="M1012.500 866H1034M1027 847V872" stroke="#444" stroke-width="1.200"/><rect x="1015.500" y="853" width="7" height="7" fill="#fff" stroke="#444" stroke-width="1.200"/>
<text x="1043.300" y="868.300" style="font-size:19.500px;fill:#555" textLength="86" lengthAdjust="spacingAndGlyphs">rayoP.dxf</text>
<path d="M1296 840H1596V874Q1596 881 1589 881H1303Q1296 881 1296 874Z" fill="#e8e8e8"/>
<path d="M1313.500 848L1321 845H1335L1339 850V869L1333 873H1319L1313.500 868Z" fill="#fff" stroke="#444" stroke-width="1.300"/>
<path d="M1317 851L1322 847H1335V863H1321L1317 860Z" fill="#999"/><path d="M1322 847V863" stroke="#444"/>
<text x="1346.400" y="868.300" style="font-size:19.500px;fill:#555" textLength="106.200" lengthAdjust="spacingAndGlyphs">Assembly 1</text>
</svg>
</body></html>
